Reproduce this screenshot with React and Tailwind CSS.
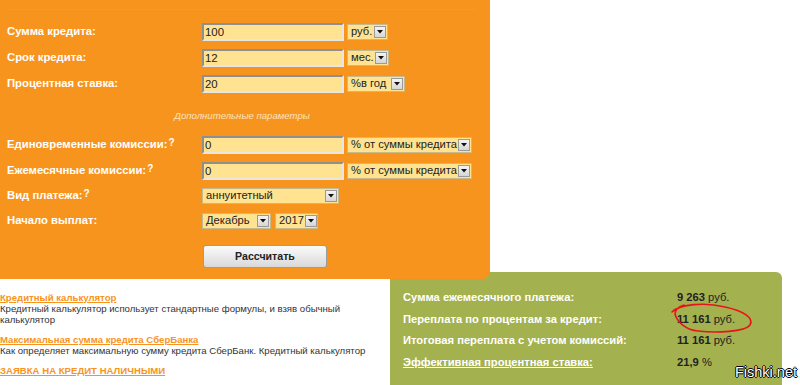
import React from "react";

const Arrow = () => (
  <span className="flex items-center justify-center w-[12px] h-[12px] border border-[#9a9a9a] bg-gradient-to-b from-[#f4f4f4] to-[#d6d6d6] ml-[1px] shrink-0">
    <svg width="6" height="4" viewBox="0 0 6 4">
      <path d="M0 0h6L3 3.5z" fill="#111" />
    </svg>
  </span>
);

const Select = ({ value, width }) => (
  <div
    className={`flex items-center justify-between h-[16px] bg-[#ffe391] border border-[#c8b98a] pl-[3px] pr-[1px] text-[11.2px] text-[#222] leading-none ${width}`}
  >
    <span className="whitespace-nowrap">{value}</span>
    <Arrow />
  </div>
);

const Input = ({ value }) => (
  <div className="w-[142px] h-[18px] bg-[#ffe391] border-2 border-t-[#8f8f8f] border-l-[#8f8f8f] border-b-[#e6e6e6] border-r-[#e6e6e6] pl-[1px] text-[11.4px] text-[#222] leading-[14px]">
    {value}
  </div>
);

const Label = ({ children, q }) => (
  <div className="w-[195px] shrink-0 text-[11.3px] font-bold text-white leading-none whitespace-nowrap">
    {children}
    {q && <sup className="text-[10px] ml-[1px] relative -top-[2px]">?</sup>}
  </div>
);

const Row = ({ children, className = "" }) => (
  <div className={`flex items-center ${className}`}>{children}</div>
);

const results = [
  ["Сумма ежемесячного платежа:", "9 263", "руб."],
  ["Переплата по процентам за кредит:", "11 161", "руб."],
  ["Итоговая переплата с учетом комиссий:", "11 161", "руб."],
  ["Эффективная процентная ставка:", "21,9", "%"],
];

export default function App() {
  return (
    <div className="relative w-[800px] h-[385px] overflow-hidden bg-white font-['Liberation_Sans',Arial,sans-serif]">
      <div className="relative z-10 w-[490px] h-[279px] bg-[#f7941d] rounded-br-[8px] pt-[9px] pl-[7px]">
        <div className="h-px w-[469px] ml-[1px] bg-[#c4a27c]" />

        <Row className="mt-[13px]">
          <Label>Сумма кредита:</Label>
          <Input value="100" />
          <div className="ml-[3px]"><Select value="руб." width="w-[41px]" /></div>
        </Row>
        <Row className="mt-[8px]">
          <Label>Срок кредита:</Label>
          <Input value="12" />
          <div className="ml-[3px]"><Select value="мес." width="w-[42px]" /></div>
        </Row>
        <Row className="mt-[8px]">
          <Label>Процентная ставка:</Label>
          <Input value="20" />
          <div className="ml-[3px]"><Select value="%в год" width="w-[58px]" /></div>
        </Row>

        <div className="mt-[16px] h-[13px] w-[470px] text-center text-[9.6px] italic text-[#fde3bd] leading-[13px]">
          Дополнительные параметры
        </div>

        <Row className="mt-[14px]">
          <Label q>Единовременные комиссии:</Label>
          <Input value="0" />
          <div className="ml-[3px]"><Select value="% от суммы кредита" width="w-[125px]" /></div>
        </Row>
        <Row className="mt-[8px]">
          <Label q>Ежемесячные комиссии:</Label>
          <Input value="0" />
          <div className="ml-[3px]"><Select value="% от суммы кредита" width="w-[125px]" /></div>
        </Row>
        <Row className="mt-[8px]">
          <Label q>Вид платежа:</Label>
          <Select value="аннуитетный" width="w-[137px]" />
        </Row>
        <Row className="mt-[9px]">
          <Label>Начало выплат:</Label>
          <Select value="Декабрь" width="w-[69px]" />
          <div className="ml-[4px]"><Select value="2017" width="w-[43px]" /></div>
        </Row>

        <div className="mt-[16px] ml-[196px] w-[124px] h-[23px] flex items-center justify-center border border-[#9c9c9c] rounded-[3px] bg-gradient-to-b from-[#fbfbfb] to-[#d9d9d9] text-[10.6px] font-bold text-[#222]">
          Рассчитать
        </div>
      </div>

      <div className="flex -mt-[7px]">
        <div className="w-[390px] pt-[20px] pr-[8px] text-[9.6px] leading-[11px] text-[#333]">
          <div className="font-bold text-[#f7941d] underline">Кредитный калькулятор</div>
          <div>Кредитный калькулятор использует стандартные формулы, и взяв обычный калькулятор</div>
          <div className="mt-[9px] font-bold text-[#f7941d] underline">Максимальная сумма кредита СберБанка</div>
          <div>Как определяет максимальную сумму кредита СберБанк. Кредитный калькулятор</div>
          <div className="mt-[9px] font-bold text-[#f7941d] underline">ЗАЯВКА НА КРЕДИТ НАЛИЧНЫМИ</div>
        </div>

        <div className="w-[392px] h-[130px] bg-[#a4b14f] rounded-tr-[6px] pt-[15px] pl-[13px]">
          {results.map(([label, num, unit], i) => (
            <div key={i} className="flex h-[21.5px] items-center text-[11.2px] leading-none">
              <div className={`w-[274px] font-bold text-white ${i === 3 ? "underline" : ""}`}>{label}</div>
              <div className="text-[#222]">
                <span className="font-bold">{num}</span> {unit}
              </div>
            </div>
          ))}
        </div>
      </div>

      <svg className="absolute left-[660px] top-[298px] z-20" width="100" height="40" viewBox="660 298 100 40">
        <path
          d="M672 312 C680 304 705 302 725 307 C744 311 754 318 750 325 C745 332 716 333 698 331 C686 330 677 322 675 314 C675 310 678 307 684 305"
          fill="none"
          stroke="#e8141b"
          strokeWidth="1.6"
          strokeLinecap="round"
        />
      </svg>

      <div className="absolute right-[3px] bottom-[6px] z-20 text-[14.5px] text-white leading-none [text-shadow:-1px_0_#000,1px_0_#000,0_-1px_#000,0_1px_#000]">
        Fishki.net
      </div>
    </div>
  );
}
